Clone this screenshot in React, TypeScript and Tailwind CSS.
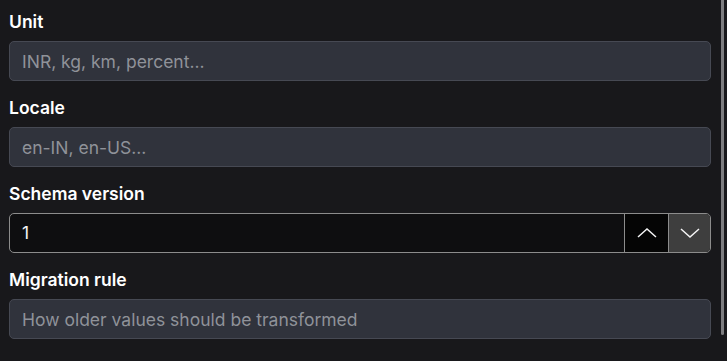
import React from 'react';

const Chevron: React.FC<{ up?: boolean }> = ({ up }) => (
    <svg width="20" height="10" viewBox="0 0 20 10" fill="none" className="block">
        <polyline
            points={up ? '1,9 10,1 19,9' : '1,1 10,9 19,1'}
            stroke="#f4f4f5"
            strokeWidth="1.5"
            strokeLinejoin="miter"
        />
    </svg>
);

const TextField: React.FC<{ label: string; placeholder: string }> = ({ label, placeholder }) => (
    <div className="mb-[15px]">
        <label className="block h-6 leading-6 text-[17.5px] font-semibold text-white mb-[7px]">{label}</label>
        <input
            type="text"
            placeholder={placeholder}
            className="block w-full h-10 px-3 rounded-[5px] bg-[#30333c] border border-[#464953] text-[17.5px] text-gray-100 placeholder:text-[#8f9299] outline-none"
        />
    </div>
);

const App: React.FC = () => {
    return (
        <div
            className="relative w-[727px] h-[361px] overflow-hidden bg-[#18181b]"
            style={{ fontFamily: 'Inter, "Noto Sans", sans-serif' }}
        >
            <div className="ml-[9px] w-[702px] pt-[10px]">
                <TextField label="Unit" placeholder="INR, kg, km, percent..." />
                <TextField label="Locale" placeholder="en-IN, en-US..." />

                <div className="mb-[15px]">
                    <label className="block h-6 leading-6 text-[17.5px] font-semibold text-white mb-[7px]">Schema version</label>
                    <div className="flex h-10 rounded-[5px] border border-[#8c8c8c] bg-[#0e0e10] overflow-hidden">
                        <input
                            type="text"
                            defaultValue="1"
                            className="flex-1 min-w-0 px-3 bg-transparent text-[17.5px] text-gray-100 outline-none"
                        />
                        <button className="w-[44px] flex items-center justify-center bg-[#050505] border-l border-[#8c8c8c]">
                            <Chevron up />
                        </button>
                        <button className="w-[42px] flex items-center justify-center bg-[#3e3e3e] border-l border-[#8c8c8c]">
                            <Chevron />
                        </button>
                    </div>
                </div>

                <TextField label="Migration rule" placeholder="How older values should be transformed" />
            </div>

            {/* scrollbar thumb */}
            <div className="absolute left-[721px] top-0 w-[3px] h-[335px] rounded-b-sm bg-[#7d7d80]"></div>
        </div>
    );
};

export default App;
